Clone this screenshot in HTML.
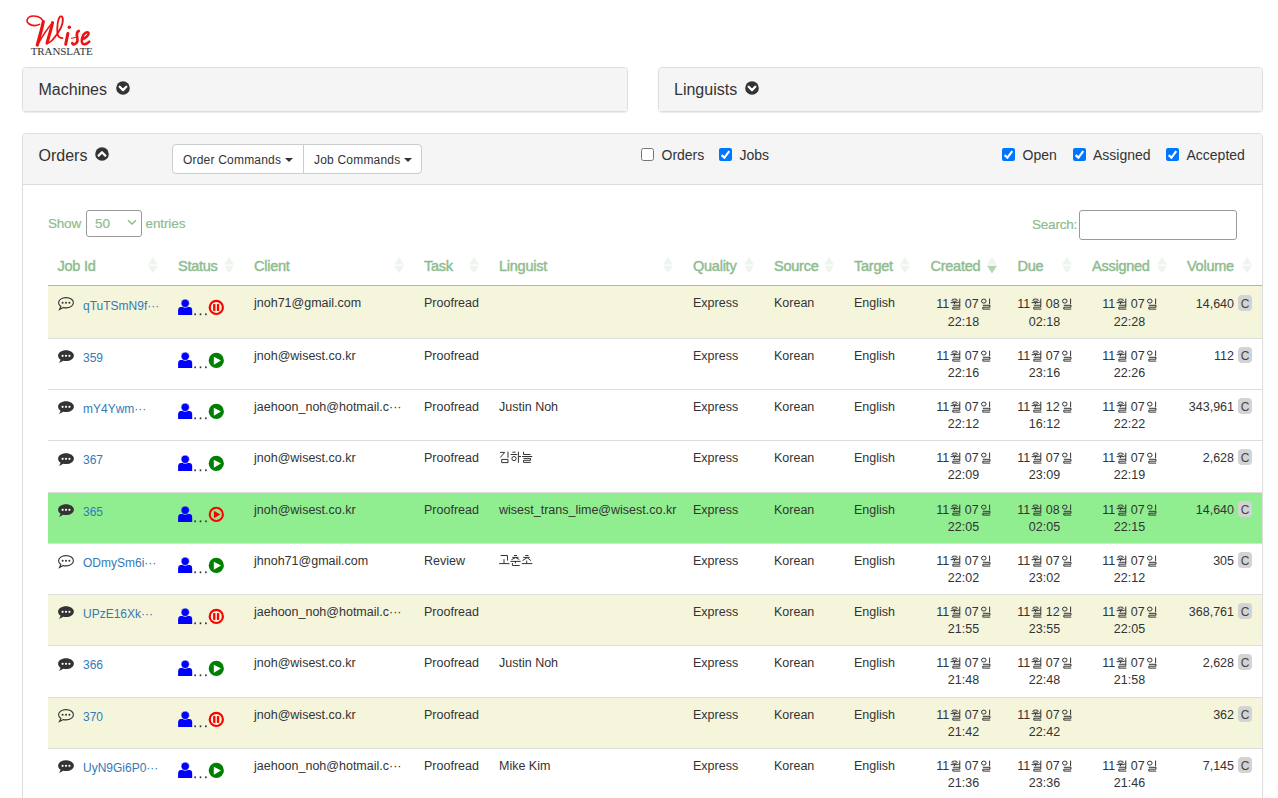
<!DOCTYPE html>
<html><head><meta charset="utf-8"><style>
*{box-sizing:border-box}
html,body{margin:0;padding:0;background:#fff}
body{width:1278px;height:798px;overflow:hidden;position:relative;font-family:"Liberation Sans",sans-serif;color:#333}
.abs{position:absolute}
.panel{position:absolute;border:1px solid #ddd;border-radius:4px;background:#fff;box-shadow:0 1px 1px rgba(0,0,0,.08)}
.ph{position:absolute;left:0;top:0;right:0;background:#f5f5f5;border-radius:3px 3px 0 0}
.ttl{position:absolute;font-size:16px;line-height:18px;margin-top:1px;white-space:nowrap}
.chev{position:absolute}
.btn{position:absolute;top:144px;height:30px;border:1px solid #ccc;background:#fff;font-size:12px;letter-spacing:0.2px;line-height:28px;padding-top:1px;white-space:nowrap;color:#333}
.caret{display:inline-block;width:0;height:0;border-top:4px solid #333;border-left:4px solid transparent;border-right:4px solid transparent;vertical-align:middle;margin-left:4px;position:relative;top:-1px}
.cb{position:absolute;width:13px;height:13px;border-radius:2px}
.cb.on{background:#0075ff}
.cb.off{border:1px solid #767676;background:#fff}
.lbl{position:absolute;font-size:14px;line-height:16px;margin-top:1px;white-space:nowrap;color:#333}
.g{color:#8fbc8f}
.th{position:absolute;top:257px;font-size:14.5px;letter-spacing:-0.25px;-webkit-text-stroke:0.45px #8fbc8f;line-height:18px;color:#8fbc8f;white-space:nowrap}
.sort{position:absolute;top:256px}
.row{position:absolute;left:48px;width:1214px}
.c{position:absolute;font-size:12.5px;line-height:18px;white-space:nowrap;color:#333}
.lnk{color:#337ab7;font-size:12px}
.bub{position:absolute}
.kg{vertical-align:-1.5px;margin-left:1px}
.badge{display:inline-block;background:#d3d3d3;border-radius:4px;width:14px;height:16px;text-align:center;line-height:18px;font-size:12px;margin-left:4px;vertical-align:top;margin-top:0px;color:#444}
</style></head><body>

<svg width="0" height="0" style="position:absolute;left:0;top:0"><defs>
<symbol id="wol" viewBox="0 0 11 12"><g fill="none" stroke="#333" stroke-width="1">
<ellipse cx="4.6" cy="2.2" rx="2.8" ry="1.15"/>
<path d="M0.6 4.65H8M4.5 4.65V6.2M8 4.1H9.8M9.8 0.6V7.3M2.8 7.25H9.8V9.2H2.8V11.1H10.4"/></g></symbol>
<symbol id="il" viewBox="0 0 11 12"><g fill="none" stroke="#333" stroke-width="1">
<ellipse cx="3.8" cy="3.1" rx="2.3" ry="2"/>
<path d="M9.6 0.6V6.3M2.8 7.3H10V9.2H2.8V11.1H10.2"/></g></symbol>
</defs></svg>

<svg class="abs" style="left:0;top:0" width="110" height="62" viewBox="0 0 110 62">
<g fill="none" stroke="#ee1111" stroke-linecap="round" stroke-linejoin="round">
<path d="M39.5 24.4C36.3 26 31.6 25.8 28.4 23.5 25.8 21.3 27 17.5 30.8 16.3 35 15.3 40.7 16.5 42.9 20.6" stroke-width="1.6"/>
<path d="M43.3 21.5C42 29 39.2 37.5 37.3 45" stroke-width="3.2"/>
<path d="M37.3 45C42 37 47.5 28.5 52.6 22.6" stroke-width="1.5"/>
<path d="M52.6 22.6C51 30 48.6 37 47 43.2" stroke-width="3"/>
<path d="M47 43.2C49.5 43.5 53.5 39.5 58.5 32 62.5 26 64 19 62 16.6 59.5 15 57.5 20 57.3 28 57 34 57.5 38 62.5 38.1" stroke-width="1.8"/>
<path d="M67.9 33.4L65.7 44.2" stroke-width="3"/>
<path d="M78.7 31C74.5 33 78.5 38 77.3 41.5 76.2 44.8 72.5 45 72.3 43.2" stroke-width="2.7"/>
<path d="M71.5 38.3L75.5 37.5" stroke-width="1.1"/>
<path d="M81.8 39.5C85 38.5 89.2 35.2 88.5 33 87.3 31.2 83.6 33 82.2 37.5 81 41.5 82 44.5 84.6 44.3 86.6 44 88.4 42.5 89.3 41.6" stroke-width="2.5"/>
</g>
<circle cx="69.3" cy="27.3" r="1.7" fill="#ee1111"/>
<text x="30.7" y="54.6" font-family="Liberation Serif" font-size="11" fill="#333" letter-spacing="-0.1">TRANSLATE</text>
</svg>

<div class="panel" style="left:22px;top:67px;width:606px;height:45px"><div class="ph" style="height:43px"></div></div>
<div class="ttl" style="left:38.5px;top:80px">Machines</div><svg class="abs" style="left:115px;top:80px" width="16" height="16" viewBox="-8 -8 16 16"><circle r="6.8" fill="#333"/><path d="M-3.3 -1.2L0 2.1L3.3 -1.2" fill="none" stroke="#fff" stroke-width="2.3" stroke-linecap="round" stroke-linejoin="round"/></svg>
<div class="panel" style="left:658px;top:67px;width:605px;height:45px"><div class="ph" style="height:43px"></div></div>
<div class="ttl" style="left:674px;top:80px">Linguists</div><svg class="abs" style="left:744px;top:80px" width="16" height="16" viewBox="-8 -8 16 16"><circle r="6.8" fill="#333"/><path d="M-3.3 -1.2L0 2.1L3.3 -1.2" fill="none" stroke="#fff" stroke-width="2.3" stroke-linecap="round" stroke-linejoin="round"/></svg>
<div class="panel" style="left:22px;top:133px;width:1241px;height:720px"><div class="ph" style="height:51px;border-bottom:1px solid #ddd"></div></div>
<div class="ttl" style="left:38.5px;top:146px">Orders</div><svg class="abs" style="left:93.5px;top:146px" width="16" height="16" viewBox="-8 -8 16 16"><circle r="6.8" fill="#333"/><path d="M-3.3 1.6L0 -1.7L3.3 1.6" fill="none" stroke="#fff" stroke-width="2.3" stroke-linecap="round" stroke-linejoin="round"/></svg>
<div class="btn" style="left:172px;width:132px;border-radius:4px 0 0 4px;padding-left:10px">Order Commands<span class="caret"></span></div>
<div class="btn" style="left:303px;width:119px;border-radius:0 4px 4px 0;padding-left:10px">Job Commands<span class="caret"></span></div>
<svg class="abs" style="left:641px;top:148px" width="13" height="13" viewBox="0 0 13 13"><rect x="0.5" y="0.5" width="12" height="12" rx="2" fill="#fff" stroke="#767676"/></svg><div class="lbl" style="left:661.5px;top:146px">Orders</div>
<svg class="abs" style="left:719px;top:148px" width="13" height="13" viewBox="0 0 13 13"><rect x="0" y="0" width="13" height="13" rx="2" fill="#0075ff"/><path d="M2.6 7.1L5.4 9.6L10.3 3.1" fill="none" stroke="#fff" stroke-width="2.1"/></svg><div class="lbl" style="left:739.5px;top:146px">Jobs</div>
<svg class="abs" style="left:1002px;top:148px" width="13" height="13" viewBox="0 0 13 13"><rect x="0" y="0" width="13" height="13" rx="2" fill="#0075ff"/><path d="M2.6 7.1L5.4 9.6L10.3 3.1" fill="none" stroke="#fff" stroke-width="2.1"/></svg><div class="lbl" style="left:1022.5px;top:146px">Open</div>
<svg class="abs" style="left:1073px;top:148px" width="13" height="13" viewBox="0 0 13 13"><rect x="0" y="0" width="13" height="13" rx="2" fill="#0075ff"/><path d="M2.6 7.1L5.4 9.6L10.3 3.1" fill="none" stroke="#fff" stroke-width="2.1"/></svg><div class="lbl" style="left:1093px;top:146px">Assigned</div>
<svg class="abs" style="left:1166px;top:148px" width="13" height="13" viewBox="0 0 13 13"><rect x="0" y="0" width="13" height="13" rx="2" fill="#0075ff"/><path d="M2.6 7.1L5.4 9.6L10.3 3.1" fill="none" stroke="#fff" stroke-width="2.1"/></svg><div class="lbl" style="left:1186.5px;top:146px">Accepted</div>
<div class="lbl g" style="left:48px;top:215px;font-size:13.5px;letter-spacing:-0.2px;-webkit-text-stroke:0.2px #8fbc8f">Show</div>
<div class="abs" style="left:86px;top:210px;width:56px;height:27px;border:1px solid #999;border-radius:3px;background:#fff"></div>
<div class="lbl g" style="left:95px;top:215px;font-size:13.5px;-webkit-text-stroke:0.2px #8fbc8f">50</div>
<svg class="abs" style="left:127px;top:219px" width="10" height="7" viewBox="0 0 10 7"><path d="M1 1.2L5 5L9 1.2" fill="none" stroke="#8fbc8f" stroke-width="1.5"/></svg>
<div class="lbl g" style="left:145.5px;top:215px;font-size:13.5px;letter-spacing:-0.1px;-webkit-text-stroke:0.2px #8fbc8f">entries</div>
<div class="lbl g" style="left:1032px;top:216px;font-size:13.5px;letter-spacing:-0.2px;-webkit-text-stroke:0.2px #8fbc8f">Search:</div>
<div class="abs" style="left:1079px;top:210px;width:158px;height:30px;border:1px solid #999;border-radius:3px;background:#fff"></div>
<div class="th" style="left:57.5px">Job Id</div><svg class="sort" style="left:147.5px" width="10" height="18" viewBox="0 0 10 18"><path d="M5 0.8L10 8.4H0z" fill="#eef5ee"/><path d="M0 9.7H10L5 17.4z" fill="#eef5ee"/></svg>
<div class="th" style="left:178px">Status</div><svg class="sort" style="left:223.5px" width="10" height="18" viewBox="0 0 10 18"><path d="M5 0.8L10 8.4H0z" fill="#eef5ee"/><path d="M0 9.7H10L5 17.4z" fill="#eef5ee"/></svg>
<div class="th" style="left:254px">Client</div><svg class="sort" style="left:393.5px" width="10" height="18" viewBox="0 0 10 18"><path d="M5 0.8L10 8.4H0z" fill="#eef5ee"/><path d="M0 9.7H10L5 17.4z" fill="#eef5ee"/></svg>
<div class="th" style="left:424px">Task</div><svg class="sort" style="left:468.5px" width="10" height="18" viewBox="0 0 10 18"><path d="M5 0.8L10 8.4H0z" fill="#eef5ee"/><path d="M0 9.7H10L5 17.4z" fill="#eef5ee"/></svg>
<div class="th" style="left:499px">Linguist</div><svg class="sort" style="left:662.5px" width="10" height="18" viewBox="0 0 10 18"><path d="M5 0.8L10 8.4H0z" fill="#eef5ee"/><path d="M0 9.7H10L5 17.4z" fill="#eef5ee"/></svg>
<div class="th" style="left:693px">Quality</div><svg class="sort" style="left:743.5px" width="10" height="18" viewBox="0 0 10 18"><path d="M5 0.8L10 8.4H0z" fill="#eef5ee"/><path d="M0 9.7H10L5 17.4z" fill="#eef5ee"/></svg>
<div class="th" style="left:774px">Source</div><svg class="sort" style="left:823.5px" width="10" height="18" viewBox="0 0 10 18"><path d="M5 0.8L10 8.4H0z" fill="#eef5ee"/><path d="M0 9.7H10L5 17.4z" fill="#eef5ee"/></svg>
<div class="th" style="left:854px">Target</div><svg class="sort" style="left:899.5px" width="10" height="18" viewBox="0 0 10 18"><path d="M5 0.8L10 8.4H0z" fill="#eef5ee"/><path d="M0 9.7H10L5 17.4z" fill="#eef5ee"/></svg>
<div class="th" style="left:930.5px">Created</div><svg class="sort" style="left:986.5px" width="10" height="18" viewBox="0 0 10 18"><path d="M5 0.8L10 8.4H0z" fill="#eef5ee"/><path d="M0 9.7H10L5 17.4z" fill="#b8d4b8"/></svg>
<div class="th" style="left:1017.5px">Due</div><svg class="sort" style="left:1061.5px" width="10" height="18" viewBox="0 0 10 18"><path d="M5 0.8L10 8.4H0z" fill="#eef5ee"/><path d="M0 9.7H10L5 17.4z" fill="#eef5ee"/></svg>
<div class="th" style="left:1092px">Assigned</div><svg class="sort" style="left:1156.5px" width="10" height="18" viewBox="0 0 10 18"><path d="M5 0.8L10 8.4H0z" fill="#eef5ee"/><path d="M0 9.7H10L5 17.4z" fill="#eef5ee"/></svg>
<div class="th" style="left:1187px">Volume</div><svg class="sort" style="left:1241.5px" width="10" height="18" viewBox="0 0 10 18"><path d="M5 0.8L10 8.4H0z" fill="#eef5ee"/><path d="M0 9.7H10L5 17.4z" fill="#eef5ee"/></svg>
<div class="abs" style="left:48px;top:285px;width:1214px;height:1px;background:#b3b3b3"></div>
<div class="row" style="top:286px;height:52px;background:#f5f5dc"></div>
<div class="abs" style="left:48px;top:338px;width:1214px;height:1px;background:#ddd"></div>
<div class="bub" style="left:57px;top:296px"><svg class="bub" width="18" height="16" viewBox="0 0 18 16"><path d="M9 1.6C4.8 1.6 1.6 3.9 1.6 6.7c0 1.5 0.9 2.8 2.3 3.8l-1.4 3.1 3.7-2c0.9 0.2 1.8 0.3 2.8 0.3 4.2 0 7.4-2.3 7.4-5.2S13.2 1.6 9 1.6z" fill="none" stroke="#333" stroke-width="1.1"/><circle cx="5.6" cy="6.8" r="1" fill="#333"/><circle cx="9" cy="6.8" r="1" fill="#333"/><circle cx="12.4" cy="6.8" r="1" fill="#333"/></svg></div>
<div class="c lnk" style="left:83px;top:297px">qTuTSmN9f···</div>
<div class="abs" style="left:178px;top:298px"><svg width="50" height="20" viewBox="0 0 50 20"><path d="M0.1 16.9V12.4C0.1 10.3 1.2 9.1 3 9.1H11.3C13.1 9.1 14.2 10.3 14.2 12.4V16.9z" fill="#00f"/><circle cx="7.2" cy="5.3" r="4.2" fill="#00f" stroke="#f5f5dc" stroke-width="0.7"/><rect x="16.3" y="15.4" width="1.6" height="1.8" fill="#333"/><rect x="21.7" y="15.4" width="1.6" height="1.8" fill="#333"/><rect x="27.1" y="15.4" width="1.6" height="1.8" fill="#333"/><circle cx="38.3" cy="9.4" r="6.6" fill="none" stroke="#f00" stroke-width="2.2"/><rect x="35.099999999999994" y="6.1000000000000005" width="2.3" height="6.8" fill="#f00"/><rect x="38.9" y="6.1000000000000005" width="2.3" height="6.8" fill="#f00"/></svg></div>
<div class="c" style="left:254px;top:294px">jnoh71@gmail.com</div>
<div class="c" style="left:424px;top:294px">Proofread</div>
<div class="c" style="left:693px;top:294px">Express</div>
<div class="c" style="left:774px;top:294px">Korean</div>
<div class="c" style="left:854px;top:294px">English</div>
<div class="c" style="left:920px;width:87px;text-align:center;top:295px;line-height:18px">11<svg class="kg" width="11" height="12"><use href="#wol"/></svg> 07<svg class="kg" width="11" height="12"><use href="#il"/></svg><br>22:18</div>
<div class="c" style="left:1007px;width:75px;text-align:center;top:295px;line-height:18px">11<svg class="kg" width="11" height="12"><use href="#wol"/></svg> 08<svg class="kg" width="11" height="12"><use href="#il"/></svg><br>02:18</div>
<div class="c" style="left:1082px;width:95px;text-align:center;top:295px;line-height:18px">11<svg class="kg" width="11" height="12"><use href="#wol"/></svg> 07<svg class="kg" width="11" height="12"><use href="#il"/></svg><br>22:28</div>
<div class="c" style="right:26px;top:295px">14,640<span class="badge">C</span></div>
<div class="row" style="top:339px;height:50px;background:#ffffff"></div>
<div class="abs" style="left:48px;top:389px;width:1214px;height:1px;background:#ddd"></div>
<div class="bub" style="left:57px;top:349.0px"><svg class="bub" width="18" height="16" viewBox="0 0 18 16"><path d="M9 1.3C4.6 1.3 1.1 3.7 1.1 6.7c0 1.6 1 3 2.5 4l-1.5 3.3 4.2-2.3c0.9 0.2 1.8 0.3 2.7 0.3 4.4 0 7.9-2.4 7.9-5.3S13.4 1.3 9 1.3z" fill="#333"/><circle cx="5.6" cy="6.8" r="1.1" fill="#fff"/><circle cx="9" cy="6.8" r="1.1" fill="#fff"/><circle cx="12.4" cy="6.8" r="1.1" fill="#fff"/></svg></div>
<div class="c lnk" style="left:83px;top:349px">359</div>
<div class="abs" style="left:178px;top:351.0px"><svg width="50" height="20" viewBox="0 0 50 20"><path d="M0.1 16.9V12.4C0.1 10.3 1.2 9.1 3 9.1H11.3C13.1 9.1 14.2 10.3 14.2 12.4V16.9z" fill="#00f"/><circle cx="7.2" cy="5.3" r="4.2" fill="#00f" stroke="#ffffff" stroke-width="0.7"/><rect x="16.3" y="15.4" width="1.6" height="1.8" fill="#333"/><rect x="21.7" y="15.4" width="1.6" height="1.8" fill="#333"/><rect x="27.1" y="15.4" width="1.6" height="1.8" fill="#333"/><circle cx="38.3" cy="9.4" r="7.6" fill="#008000"/><path d="M35.8 5.7L43.0 9.5L35.8 13.7z" fill="#fff"/></svg></div>
<div class="c" style="left:254px;top:347px">jnoh@wisest.co.kr</div>
<div class="c" style="left:424px;top:347px">Proofread</div>
<div class="c" style="left:693px;top:347px">Express</div>
<div class="c" style="left:774px;top:347px">Korean</div>
<div class="c" style="left:854px;top:347px">English</div>
<div class="c" style="left:920px;width:87px;text-align:center;top:348px;line-height:17.2px">11<svg class="kg" width="11" height="12"><use href="#wol"/></svg> 07<svg class="kg" width="11" height="12"><use href="#il"/></svg><br>22:16</div>
<div class="c" style="left:1007px;width:75px;text-align:center;top:348px;line-height:17.2px">11<svg class="kg" width="11" height="12"><use href="#wol"/></svg> 07<svg class="kg" width="11" height="12"><use href="#il"/></svg><br>23:16</div>
<div class="c" style="left:1082px;width:95px;text-align:center;top:348px;line-height:17.2px">11<svg class="kg" width="11" height="12"><use href="#wol"/></svg> 07<svg class="kg" width="11" height="12"><use href="#il"/></svg><br>22:26</div>
<div class="c" style="right:26px;top:347px">112<span class="badge">C</span></div>
<div class="row" style="top:390px;height:50px;background:#ffffff"></div>
<div class="abs" style="left:48px;top:440px;width:1214px;height:1px;background:#ddd"></div>
<div class="bub" style="left:57px;top:400.25px"><svg class="bub" width="18" height="16" viewBox="0 0 18 16"><path d="M9 1.3C4.6 1.3 1.1 3.7 1.1 6.7c0 1.6 1 3 2.5 4l-1.5 3.3 4.2-2.3c0.9 0.2 1.8 0.3 2.7 0.3 4.4 0 7.9-2.4 7.9-5.3S13.4 1.3 9 1.3z" fill="#333"/><circle cx="5.6" cy="6.8" r="1.1" fill="#fff"/><circle cx="9" cy="6.8" r="1.1" fill="#fff"/><circle cx="12.4" cy="6.8" r="1.1" fill="#fff"/></svg></div>
<div class="c lnk" style="left:83px;top:400px">mY4Ywm···</div>
<div class="abs" style="left:178px;top:402.25px"><svg width="50" height="20" viewBox="0 0 50 20"><path d="M0.1 16.9V12.4C0.1 10.3 1.2 9.1 3 9.1H11.3C13.1 9.1 14.2 10.3 14.2 12.4V16.9z" fill="#00f"/><circle cx="7.2" cy="5.3" r="4.2" fill="#00f" stroke="#ffffff" stroke-width="0.7"/><rect x="16.3" y="15.4" width="1.6" height="1.8" fill="#333"/><rect x="21.7" y="15.4" width="1.6" height="1.8" fill="#333"/><rect x="27.1" y="15.4" width="1.6" height="1.8" fill="#333"/><circle cx="38.3" cy="9.4" r="7.6" fill="#008000"/><path d="M35.8 5.7L43.0 9.5L35.8 13.7z" fill="#fff"/></svg></div>
<div class="c" style="left:254px;top:398px">jaehoon_noh@hotmail.c···</div>
<div class="c" style="left:424px;top:398px">Proofread</div>
<div class="c" style="left:499px;top:398px">Justin Noh</div>
<div class="c" style="left:693px;top:398px">Express</div>
<div class="c" style="left:774px;top:398px">Korean</div>
<div class="c" style="left:854px;top:398px">English</div>
<div class="c" style="left:920px;width:87px;text-align:center;top:399px;line-height:17.2px">11<svg class="kg" width="11" height="12"><use href="#wol"/></svg> 07<svg class="kg" width="11" height="12"><use href="#il"/></svg><br>22:12</div>
<div class="c" style="left:1007px;width:75px;text-align:center;top:399px;line-height:17.2px">11<svg class="kg" width="11" height="12"><use href="#wol"/></svg> 12<svg class="kg" width="11" height="12"><use href="#il"/></svg><br>16:12</div>
<div class="c" style="left:1082px;width:95px;text-align:center;top:399px;line-height:17.2px">11<svg class="kg" width="11" height="12"><use href="#wol"/></svg> 07<svg class="kg" width="11" height="12"><use href="#il"/></svg><br>22:22</div>
<div class="c" style="right:26px;top:398px">343,961<span class="badge">C</span></div>
<div class="row" style="top:441px;height:51px;background:#ffffff"></div>
<div class="abs" style="left:48px;top:492px;width:1214px;height:1px;background:#ddd"></div>
<div class="bub" style="left:57px;top:451.5px"><svg class="bub" width="18" height="16" viewBox="0 0 18 16"><path d="M9 1.3C4.6 1.3 1.1 3.7 1.1 6.7c0 1.6 1 3 2.5 4l-1.5 3.3 4.2-2.3c0.9 0.2 1.8 0.3 2.7 0.3 4.4 0 7.9-2.4 7.9-5.3S13.4 1.3 9 1.3z" fill="#333"/><circle cx="5.6" cy="6.8" r="1.1" fill="#fff"/><circle cx="9" cy="6.8" r="1.1" fill="#fff"/><circle cx="12.4" cy="6.8" r="1.1" fill="#fff"/></svg></div>
<div class="c lnk" style="left:83px;top:451px">367</div>
<div class="abs" style="left:178px;top:453.5px"><svg width="50" height="20" viewBox="0 0 50 20"><path d="M0.1 16.9V12.4C0.1 10.3 1.2 9.1 3 9.1H11.3C13.1 9.1 14.2 10.3 14.2 12.4V16.9z" fill="#00f"/><circle cx="7.2" cy="5.3" r="4.2" fill="#00f" stroke="#ffffff" stroke-width="0.7"/><rect x="16.3" y="15.4" width="1.6" height="1.8" fill="#333"/><rect x="21.7" y="15.4" width="1.6" height="1.8" fill="#333"/><rect x="27.1" y="15.4" width="1.6" height="1.8" fill="#333"/><circle cx="38.3" cy="9.4" r="7.6" fill="#008000"/><path d="M35.8 5.7L43.0 9.5L35.8 13.7z" fill="#fff"/></svg></div>
<div class="c" style="left:254px;top:449px">jnoh@wisest.co.kr</div>
<div class="c" style="left:424px;top:449px">Proofread</div>
<svg class="abs" style="left:495px;top:448px" width="45" height="20" viewBox="0 0 45 20"><g fill="none" stroke="#333" stroke-width="1"><path d="M5.1 4.4H9.7L5.3 9.5M13 3.6V9.8M6.7 11.4H13V14.6H6.7z"/><path d="M17.4 4.2H20.6M15.5 6.5H22.2M23.4 3.6V14.8M23.4 8.5H26"/><circle cx="19" cy="10.6" r="2.1"/><path d="M28.5 3.8V6.5H35.6M27.1 8.5H37.3M28.5 10.4H35.6V12.3H28.5V14.4H35.8"/></g></svg>
<div class="c" style="left:693px;top:449px">Express</div>
<div class="c" style="left:774px;top:449px">Korean</div>
<div class="c" style="left:854px;top:449px">English</div>
<div class="c" style="left:920px;width:87px;text-align:center;top:450px;line-height:17.2px">11<svg class="kg" width="11" height="12"><use href="#wol"/></svg> 07<svg class="kg" width="11" height="12"><use href="#il"/></svg><br>22:09</div>
<div class="c" style="left:1007px;width:75px;text-align:center;top:450px;line-height:17.2px">11<svg class="kg" width="11" height="12"><use href="#wol"/></svg> 07<svg class="kg" width="11" height="12"><use href="#il"/></svg><br>23:09</div>
<div class="c" style="left:1082px;width:95px;text-align:center;top:450px;line-height:17.2px">11<svg class="kg" width="11" height="12"><use href="#wol"/></svg> 07<svg class="kg" width="11" height="12"><use href="#il"/></svg><br>22:19</div>
<div class="c" style="right:26px;top:449px">2,628<span class="badge">C</span></div>
<div class="row" style="top:493px;height:50px;background:#90ee90"></div>
<div class="abs" style="left:48px;top:543px;width:1214px;height:1px;background:#ddd"></div>
<div class="bub" style="left:57px;top:502.75px"><svg class="bub" width="18" height="16" viewBox="0 0 18 16"><path d="M9 1.3C4.6 1.3 1.1 3.7 1.1 6.7c0 1.6 1 3 2.5 4l-1.5 3.3 4.2-2.3c0.9 0.2 1.8 0.3 2.7 0.3 4.4 0 7.9-2.4 7.9-5.3S13.4 1.3 9 1.3z" fill="#333"/><circle cx="5.6" cy="6.8" r="1.1" fill="#fff"/><circle cx="9" cy="6.8" r="1.1" fill="#fff"/><circle cx="12.4" cy="6.8" r="1.1" fill="#fff"/></svg></div>
<div class="c lnk" style="left:83px;top:503px">365</div>
<div class="abs" style="left:178px;top:504.75px"><svg width="50" height="20" viewBox="0 0 50 20"><path d="M0.1 16.9V12.4C0.1 10.3 1.2 9.1 3 9.1H11.3C13.1 9.1 14.2 10.3 14.2 12.4V16.9z" fill="#00f"/><circle cx="7.2" cy="5.3" r="4.2" fill="#00f" stroke="#90ee90" stroke-width="0.7"/><rect x="16.3" y="15.4" width="1.6" height="1.8" fill="#333"/><rect x="21.7" y="15.4" width="1.6" height="1.8" fill="#333"/><rect x="27.1" y="15.4" width="1.6" height="1.8" fill="#333"/><circle cx="38.3" cy="9.4" r="6.6" fill="none" stroke="#f00" stroke-width="2.1"/><path d="M35.9 5.800000000000001L42.4 9.5L35.9 13.2z" fill="#f00"/></svg></div>
<div class="c" style="left:254px;top:501px">jnoh@wisest.co.kr</div>
<div class="c" style="left:424px;top:501px">Proofread</div>
<div class="c" style="left:499px;top:501px">wisest_trans_lime@wisest.co.kr</div>
<div class="c" style="left:693px;top:501px">Express</div>
<div class="c" style="left:774px;top:501px">Korean</div>
<div class="c" style="left:854px;top:501px">English</div>
<div class="c" style="left:920px;width:87px;text-align:center;top:502px;line-height:17.2px">11<svg class="kg" width="11" height="12"><use href="#wol"/></svg> 07<svg class="kg" width="11" height="12"><use href="#il"/></svg><br>22:05</div>
<div class="c" style="left:1007px;width:75px;text-align:center;top:502px;line-height:17.2px">11<svg class="kg" width="11" height="12"><use href="#wol"/></svg> 08<svg class="kg" width="11" height="12"><use href="#il"/></svg><br>02:05</div>
<div class="c" style="left:1082px;width:95px;text-align:center;top:502px;line-height:17.2px">11<svg class="kg" width="11" height="12"><use href="#wol"/></svg> 07<svg class="kg" width="11" height="12"><use href="#il"/></svg><br>22:15</div>
<div class="c" style="right:26px;top:501px">14,640<span class="badge">C</span></div>
<div class="row" style="top:544px;height:50px;background:#ffffff"></div>
<div class="abs" style="left:48px;top:594px;width:1214px;height:1px;background:#ddd"></div>
<div class="bub" style="left:57px;top:554.0px"><svg class="bub" width="18" height="16" viewBox="0 0 18 16"><path d="M9 1.6C4.8 1.6 1.6 3.9 1.6 6.7c0 1.5 0.9 2.8 2.3 3.8l-1.4 3.1 3.7-2c0.9 0.2 1.8 0.3 2.8 0.3 4.2 0 7.4-2.3 7.4-5.2S13.2 1.6 9 1.6z" fill="none" stroke="#333" stroke-width="1.1"/><circle cx="5.6" cy="6.8" r="1" fill="#333"/><circle cx="9" cy="6.8" r="1" fill="#333"/><circle cx="12.4" cy="6.8" r="1" fill="#333"/></svg></div>
<div class="c lnk" style="left:83px;top:554px">ODmySm6i···</div>
<div class="abs" style="left:178px;top:556.0px"><svg width="50" height="20" viewBox="0 0 50 20"><path d="M0.1 16.9V12.4C0.1 10.3 1.2 9.1 3 9.1H11.3C13.1 9.1 14.2 10.3 14.2 12.4V16.9z" fill="#00f"/><circle cx="7.2" cy="5.3" r="4.2" fill="#00f" stroke="#ffffff" stroke-width="0.7"/><rect x="16.3" y="15.4" width="1.6" height="1.8" fill="#333"/><rect x="21.7" y="15.4" width="1.6" height="1.8" fill="#333"/><rect x="27.1" y="15.4" width="1.6" height="1.8" fill="#333"/><circle cx="38.3" cy="9.4" r="7.6" fill="#008000"/><path d="M35.8 5.7L43.0 9.5L35.8 13.7z" fill="#fff"/></svg></div>
<div class="c" style="left:254px;top:552px">jhnoh71@gmail.com</div>
<div class="c" style="left:424px;top:552px">Review</div>
<svg class="abs" style="left:495px;top:550px" width="45" height="20" viewBox="0 0 45 20"><g fill="none" stroke="#333" stroke-width="1"><path d="M5.6 5.5H12.5V10.6M9 9.2V13.4M4.2 13.6H14.4"/><path d="M19 5.5H22M17.3 7.4H23.4M20.8 7.6L16.5 9.6M20.8 7.6L24.3 9.6M15.5 11.4H25.7M20.4 11.4V13.4M17.4 13V15.5H24.6"/><path d="M30.3 5.5H33.5M28.2 7.4H34.7M32.2 7.6L27.5 10.6M32.2 7.6L35.9 10.6M31.7 10.6V13.4M26.8 13.6H37.3"/></g></svg>
<div class="c" style="left:693px;top:552px">Express</div>
<div class="c" style="left:774px;top:552px">Korean</div>
<div class="c" style="left:854px;top:552px">English</div>
<div class="c" style="left:920px;width:87px;text-align:center;top:553px;line-height:17.2px">11<svg class="kg" width="11" height="12"><use href="#wol"/></svg> 07<svg class="kg" width="11" height="12"><use href="#il"/></svg><br>22:02</div>
<div class="c" style="left:1007px;width:75px;text-align:center;top:553px;line-height:17.2px">11<svg class="kg" width="11" height="12"><use href="#wol"/></svg> 07<svg class="kg" width="11" height="12"><use href="#il"/></svg><br>23:02</div>
<div class="c" style="left:1082px;width:95px;text-align:center;top:553px;line-height:17.2px">11<svg class="kg" width="11" height="12"><use href="#wol"/></svg> 07<svg class="kg" width="11" height="12"><use href="#il"/></svg><br>22:12</div>
<div class="c" style="right:26px;top:552px">305<span class="badge">C</span></div>
<div class="row" style="top:595px;height:50px;background:#f5f5dc"></div>
<div class="abs" style="left:48px;top:645px;width:1214px;height:1px;background:#ddd"></div>
<div class="bub" style="left:57px;top:605.25px"><svg class="bub" width="18" height="16" viewBox="0 0 18 16"><path d="M9 1.3C4.6 1.3 1.1 3.7 1.1 6.7c0 1.6 1 3 2.5 4l-1.5 3.3 4.2-2.3c0.9 0.2 1.8 0.3 2.7 0.3 4.4 0 7.9-2.4 7.9-5.3S13.4 1.3 9 1.3z" fill="#333"/><circle cx="5.6" cy="6.8" r="1.1" fill="#fff"/><circle cx="9" cy="6.8" r="1.1" fill="#fff"/><circle cx="12.4" cy="6.8" r="1.1" fill="#fff"/></svg></div>
<div class="c lnk" style="left:83px;top:605px">UPzE16Xk···</div>
<div class="abs" style="left:178px;top:607.25px"><svg width="50" height="20" viewBox="0 0 50 20"><path d="M0.1 16.9V12.4C0.1 10.3 1.2 9.1 3 9.1H11.3C13.1 9.1 14.2 10.3 14.2 12.4V16.9z" fill="#00f"/><circle cx="7.2" cy="5.3" r="4.2" fill="#00f" stroke="#f5f5dc" stroke-width="0.7"/><rect x="16.3" y="15.4" width="1.6" height="1.8" fill="#333"/><rect x="21.7" y="15.4" width="1.6" height="1.8" fill="#333"/><rect x="27.1" y="15.4" width="1.6" height="1.8" fill="#333"/><circle cx="38.3" cy="9.4" r="6.6" fill="none" stroke="#f00" stroke-width="2.2"/><rect x="35.099999999999994" y="6.1000000000000005" width="2.3" height="6.8" fill="#f00"/><rect x="38.9" y="6.1000000000000005" width="2.3" height="6.8" fill="#f00"/></svg></div>
<div class="c" style="left:254px;top:603px">jaehoon_noh@hotmail.c···</div>
<div class="c" style="left:424px;top:603px">Proofread</div>
<div class="c" style="left:693px;top:603px">Express</div>
<div class="c" style="left:774px;top:603px">Korean</div>
<div class="c" style="left:854px;top:603px">English</div>
<div class="c" style="left:920px;width:87px;text-align:center;top:604px;line-height:17.2px">11<svg class="kg" width="11" height="12"><use href="#wol"/></svg> 07<svg class="kg" width="11" height="12"><use href="#il"/></svg><br>21:55</div>
<div class="c" style="left:1007px;width:75px;text-align:center;top:604px;line-height:17.2px">11<svg class="kg" width="11" height="12"><use href="#wol"/></svg> 12<svg class="kg" width="11" height="12"><use href="#il"/></svg><br>23:55</div>
<div class="c" style="left:1082px;width:95px;text-align:center;top:604px;line-height:17.2px">11<svg class="kg" width="11" height="12"><use href="#wol"/></svg> 07<svg class="kg" width="11" height="12"><use href="#il"/></svg><br>22:05</div>
<div class="c" style="right:26px;top:603px">368,761<span class="badge">C</span></div>
<div class="row" style="top:646px;height:51px;background:#ffffff"></div>
<div class="abs" style="left:48px;top:697px;width:1214px;height:1px;background:#ddd"></div>
<div class="bub" style="left:57px;top:656.5px"><svg class="bub" width="18" height="16" viewBox="0 0 18 16"><path d="M9 1.3C4.6 1.3 1.1 3.7 1.1 6.7c0 1.6 1 3 2.5 4l-1.5 3.3 4.2-2.3c0.9 0.2 1.8 0.3 2.7 0.3 4.4 0 7.9-2.4 7.9-5.3S13.4 1.3 9 1.3z" fill="#333"/><circle cx="5.6" cy="6.8" r="1.1" fill="#fff"/><circle cx="9" cy="6.8" r="1.1" fill="#fff"/><circle cx="12.4" cy="6.8" r="1.1" fill="#fff"/></svg></div>
<div class="c lnk" style="left:83px;top:656px">366</div>
<div class="abs" style="left:178px;top:658.5px"><svg width="50" height="20" viewBox="0 0 50 20"><path d="M0.1 16.9V12.4C0.1 10.3 1.2 9.1 3 9.1H11.3C13.1 9.1 14.2 10.3 14.2 12.4V16.9z" fill="#00f"/><circle cx="7.2" cy="5.3" r="4.2" fill="#00f" stroke="#ffffff" stroke-width="0.7"/><rect x="16.3" y="15.4" width="1.6" height="1.8" fill="#333"/><rect x="21.7" y="15.4" width="1.6" height="1.8" fill="#333"/><rect x="27.1" y="15.4" width="1.6" height="1.8" fill="#333"/><circle cx="38.3" cy="9.4" r="7.6" fill="#008000"/><path d="M35.8 5.7L43.0 9.5L35.8 13.7z" fill="#fff"/></svg></div>
<div class="c" style="left:254px;top:654px">jnoh@wisest.co.kr</div>
<div class="c" style="left:424px;top:654px">Proofread</div>
<div class="c" style="left:499px;top:654px">Justin Noh</div>
<div class="c" style="left:693px;top:654px">Express</div>
<div class="c" style="left:774px;top:654px">Korean</div>
<div class="c" style="left:854px;top:654px">English</div>
<div class="c" style="left:920px;width:87px;text-align:center;top:655px;line-height:17.2px">11<svg class="kg" width="11" height="12"><use href="#wol"/></svg> 07<svg class="kg" width="11" height="12"><use href="#il"/></svg><br>21:48</div>
<div class="c" style="left:1007px;width:75px;text-align:center;top:655px;line-height:17.2px">11<svg class="kg" width="11" height="12"><use href="#wol"/></svg> 07<svg class="kg" width="11" height="12"><use href="#il"/></svg><br>22:48</div>
<div class="c" style="left:1082px;width:95px;text-align:center;top:655px;line-height:17.2px">11<svg class="kg" width="11" height="12"><use href="#wol"/></svg> 07<svg class="kg" width="11" height="12"><use href="#il"/></svg><br>21:58</div>
<div class="c" style="right:26px;top:654px">2,628<span class="badge">C</span></div>
<div class="row" style="top:698px;height:50px;background:#f5f5dc"></div>
<div class="abs" style="left:48px;top:748px;width:1214px;height:1px;background:#ddd"></div>
<div class="bub" style="left:57px;top:707.75px"><svg class="bub" width="18" height="16" viewBox="0 0 18 16"><path d="M9 1.6C4.8 1.6 1.6 3.9 1.6 6.7c0 1.5 0.9 2.8 2.3 3.8l-1.4 3.1 3.7-2c0.9 0.2 1.8 0.3 2.8 0.3 4.2 0 7.4-2.3 7.4-5.2S13.2 1.6 9 1.6z" fill="none" stroke="#333" stroke-width="1.1"/><circle cx="5.6" cy="6.8" r="1" fill="#333"/><circle cx="9" cy="6.8" r="1" fill="#333"/><circle cx="12.4" cy="6.8" r="1" fill="#333"/></svg></div>
<div class="c lnk" style="left:83px;top:708px">370</div>
<div class="abs" style="left:178px;top:709.75px"><svg width="50" height="20" viewBox="0 0 50 20"><path d="M0.1 16.9V12.4C0.1 10.3 1.2 9.1 3 9.1H11.3C13.1 9.1 14.2 10.3 14.2 12.4V16.9z" fill="#00f"/><circle cx="7.2" cy="5.3" r="4.2" fill="#00f" stroke="#f5f5dc" stroke-width="0.7"/><rect x="16.3" y="15.4" width="1.6" height="1.8" fill="#333"/><rect x="21.7" y="15.4" width="1.6" height="1.8" fill="#333"/><rect x="27.1" y="15.4" width="1.6" height="1.8" fill="#333"/><circle cx="38.3" cy="9.4" r="6.6" fill="none" stroke="#f00" stroke-width="2.2"/><rect x="35.099999999999994" y="6.1000000000000005" width="2.3" height="6.8" fill="#f00"/><rect x="38.9" y="6.1000000000000005" width="2.3" height="6.8" fill="#f00"/></svg></div>
<div class="c" style="left:254px;top:706px">jnoh@wisest.co.kr</div>
<div class="c" style="left:424px;top:706px">Proofread</div>
<div class="c" style="left:693px;top:706px">Express</div>
<div class="c" style="left:774px;top:706px">Korean</div>
<div class="c" style="left:854px;top:706px">English</div>
<div class="c" style="left:920px;width:87px;text-align:center;top:707px;line-height:17.2px">11<svg class="kg" width="11" height="12"><use href="#wol"/></svg> 07<svg class="kg" width="11" height="12"><use href="#il"/></svg><br>21:42</div>
<div class="c" style="left:1007px;width:75px;text-align:center;top:707px;line-height:17.2px">11<svg class="kg" width="11" height="12"><use href="#wol"/></svg> 07<svg class="kg" width="11" height="12"><use href="#il"/></svg><br>22:42</div>
<div class="c" style="right:26px;top:706px">362<span class="badge">C</span></div>
<div class="row" style="top:749px;height:50px;background:#ffffff"></div>
<div class="abs" style="left:48px;top:799px;width:1214px;height:1px;background:#ddd"></div>
<div class="bub" style="left:57px;top:759.0px"><svg class="bub" width="18" height="16" viewBox="0 0 18 16"><path d="M9 1.3C4.6 1.3 1.1 3.7 1.1 6.7c0 1.6 1 3 2.5 4l-1.5 3.3 4.2-2.3c0.9 0.2 1.8 0.3 2.7 0.3 4.4 0 7.9-2.4 7.9-5.3S13.4 1.3 9 1.3z" fill="#333"/><circle cx="5.6" cy="6.8" r="1.1" fill="#fff"/><circle cx="9" cy="6.8" r="1.1" fill="#fff"/><circle cx="12.4" cy="6.8" r="1.1" fill="#fff"/></svg></div>
<div class="c lnk" style="left:83px;top:759px">UyN9Gi6P0···</div>
<div class="abs" style="left:178px;top:761.0px"><svg width="50" height="20" viewBox="0 0 50 20"><path d="M0.1 16.9V12.4C0.1 10.3 1.2 9.1 3 9.1H11.3C13.1 9.1 14.2 10.3 14.2 12.4V16.9z" fill="#00f"/><circle cx="7.2" cy="5.3" r="4.2" fill="#00f" stroke="#ffffff" stroke-width="0.7"/><rect x="16.3" y="15.4" width="1.6" height="1.8" fill="#333"/><rect x="21.7" y="15.4" width="1.6" height="1.8" fill="#333"/><rect x="27.1" y="15.4" width="1.6" height="1.8" fill="#333"/><circle cx="38.3" cy="9.4" r="7.6" fill="#008000"/><path d="M35.8 5.7L43.0 9.5L35.8 13.7z" fill="#fff"/></svg></div>
<div class="c" style="left:254px;top:757px">jaehoon_noh@hotmail.c···</div>
<div class="c" style="left:424px;top:757px">Proofread</div>
<div class="c" style="left:499px;top:757px">Mike Kim</div>
<div class="c" style="left:693px;top:757px">Express</div>
<div class="c" style="left:774px;top:757px">Korean</div>
<div class="c" style="left:854px;top:757px">English</div>
<div class="c" style="left:920px;width:87px;text-align:center;top:758px;line-height:17.2px">11<svg class="kg" width="11" height="12"><use href="#wol"/></svg> 07<svg class="kg" width="11" height="12"><use href="#il"/></svg><br>21:36</div>
<div class="c" style="left:1007px;width:75px;text-align:center;top:758px;line-height:17.2px">11<svg class="kg" width="11" height="12"><use href="#wol"/></svg> 07<svg class="kg" width="11" height="12"><use href="#il"/></svg><br>23:36</div>
<div class="c" style="left:1082px;width:95px;text-align:center;top:758px;line-height:17.2px">11<svg class="kg" width="11" height="12"><use href="#wol"/></svg> 07<svg class="kg" width="11" height="12"><use href="#il"/></svg><br>21:46</div>
<div class="c" style="right:26px;top:757px">7,145<span class="badge">C</span></div>
</body></html>
